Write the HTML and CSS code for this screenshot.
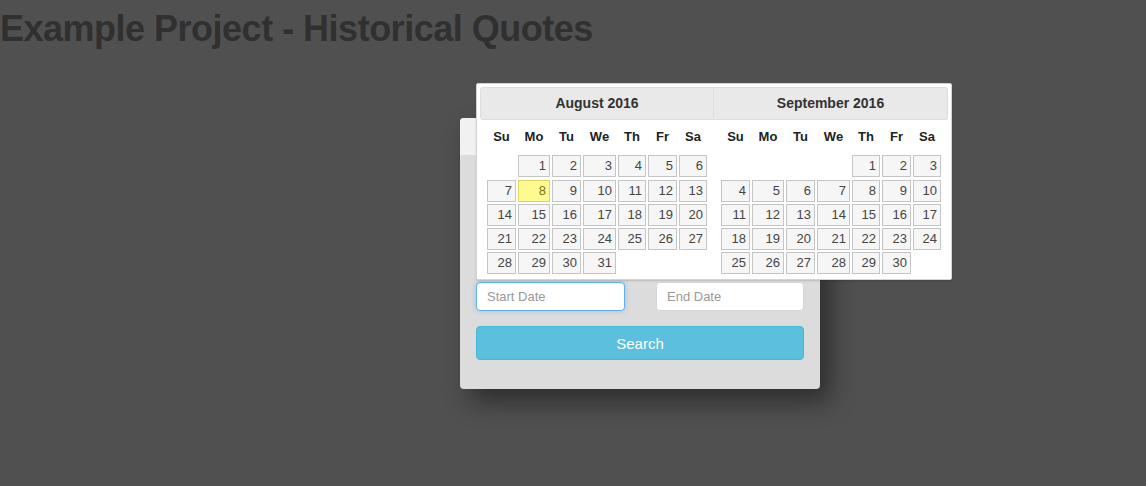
FILE: index.html
```html
<!DOCTYPE html>
<html>
<head>
<meta charset="utf-8">
<link rel="stylesheet" href="styles.css">
</head>
<body>
<h1 class="title">Example Project - Historical Quotes</h1>

<div class="modal">
  <div class="modal-header"></div>
  <div class="modal-body">
    <div class="date-row">
      <input class="date-input focused" type="text" placeholder="Start Date">
      <input class="date-input" type="text" placeholder="End Date">
    </div>
    <button class="search-btn">Search</button>
  </div>
</div>

<div class="datepicker">
  <div class="month first">
    <div class="month-header">August 2016</div>
    <div class="days">
      <div class="dn">Su</div><div class="dn">Mo</div><div class="dn">Tu</div><div class="dn">We</div><div class="dn">Th</div><div class="dn">Fr</div><div class="dn">Sa</div>
      <div class="empty"></div><div class="d">1</div><div class="d">2</div><div class="d">3</div><div class="d">4</div><div class="d">5</div><div class="d">6</div>
      <div class="d">7</div><div class="d today">8</div><div class="d">9</div><div class="d">10</div><div class="d">11</div><div class="d">12</div><div class="d">13</div>
      <div class="d">14</div><div class="d">15</div><div class="d">16</div><div class="d">17</div><div class="d">18</div><div class="d">19</div><div class="d">20</div>
      <div class="d">21</div><div class="d">22</div><div class="d">23</div><div class="d">24</div><div class="d">25</div><div class="d">26</div><div class="d">27</div>
      <div class="d">28</div><div class="d">29</div><div class="d">30</div><div class="d">31</div>
    </div>
  </div>
  <div class="month last">
    <div class="month-header">September 2016</div>
    <div class="days">
      <div class="dn">Su</div><div class="dn">Mo</div><div class="dn">Tu</div><div class="dn">We</div><div class="dn">Th</div><div class="dn">Fr</div><div class="dn">Sa</div>
      <div class="empty"></div><div class="empty"></div><div class="empty"></div><div class="empty"></div><div class="d">1</div><div class="d">2</div><div class="d">3</div>
      <div class="d">4</div><div class="d">5</div><div class="d">6</div><div class="d">7</div><div class="d">8</div><div class="d">9</div><div class="d">10</div>
      <div class="d">11</div><div class="d">12</div><div class="d">13</div><div class="d">14</div><div class="d">15</div><div class="d">16</div><div class="d">17</div>
      <div class="d">18</div><div class="d">19</div><div class="d">20</div><div class="d">21</div><div class="d">22</div><div class="d">23</div><div class="d">24</div>
      <div class="d">25</div><div class="d">26</div><div class="d">27</div><div class="d">28</div><div class="d">29</div><div class="d">30</div>
    </div>
  </div>
</div>
</body>
</html>
```

FILE: styles.css
```css
* { box-sizing: border-box; }

html, body {
  margin: 0;
  padding: 0;
  height: 100%;
}

body {
  background: #505050;
  font-family: "Liberation Sans", Arial, sans-serif;
  overflow: hidden;
}

.title {
  margin: 9px 0 0 0;
  font-size: 36px;
  line-height: 1.1;
  font-weight: bold;
  letter-spacing: -0.5px;
  color: #303030;
}

.modal {
  position: absolute;
  top: 118px;
  left: 460px;
  width: 360px;
  background: #dcdcdc;
  border-radius: 4px;
  box-shadow: 10px 12px 26px rgba(0, 0, 0, 0.45);
}

.modal-header {
  height: 37px;
  background: #f1f1f1;
  border-radius: 4px 4px 0 0;
}

.modal-body {
  padding: 127px 16px 29px 16px;
}

.date-row {
  display: grid;
  grid-template-columns: 149px 148px;
  justify-content: space-between;
}

.date-input {
  height: 29px;
  border: 1px solid #d6d6d6;
  border-radius: 4px;
  background: #fff;
  padding: 0 10px;
  font-family: "Liberation Sans", Arial, sans-serif;
  font-size: 13px;
  color: #555;
  outline: none;
}

.date-input::placeholder {
  color: #999;
}

.date-input.focused {
  border-color: #66afe9;
  box-shadow: inset 0 1px 1px rgba(0, 0, 0, 0.075), 0 0 5px rgba(102, 175, 233, 0.6);
}

.search-btn {
  display: block;
  width: 100%;
  height: 34px;
  margin-top: 15px;
  background: #5bc0de;
  border: 1px solid #46b8da;
  border-radius: 4px;
  color: #fff;
  font-family: "Liberation Sans", Arial, sans-serif;
  font-size: 15px;
  padding: 0;
}

.datepicker {
  position: absolute;
  top: 83px;
  left: 476px;
  width: 476px;
  height: 197px;
  background: #fff;
  border: 1px solid #d4d4d4;
  border-radius: 2px;
  padding: 3px;
  display: grid;
  grid-template-columns: 1fr 1fr;
  box-shadow: 0 1px 2px rgba(0, 0, 0, 0.15);
}

.month {
  display: flex;
  flex-direction: column;
  align-items: center;
}

.month-header {
  align-self: stretch;
  height: 33px;
  padding-bottom: 1px;
  background: #e9e9e9;
  border: 1px solid #dddddd;
  color: #333;
  font-weight: bold;
  font-size: 14px;
  display: flex;
  align-items: center;
  justify-content: center;
}

.first .month-header {
  border-radius: 3px 0 0 3px;
}

.last .month-header {
  border-left: 0;
  border-radius: 0 3px 3px 0;
}

.days {
  display: grid;
  grid-template-columns: 29px 32px 29px 33px 28px 29px 28px;
  grid-template-rows: 33px;
  grid-auto-rows: 22px;
  column-gap: 2px;
  row-gap: 2.25px;
}

.dn {
  font-weight: bold;
  font-size: 13px;
  color: #222;
  display: flex;
  align-items: center;
  justify-content: center;
}

.d {
  background: #f6f6f6;
  border: 1px solid #c5c5c5;
  color: #454545;
  font-size: 13px;
  text-align: right;
  padding-right: 3px;
  line-height: 20px;
}

.d.today {
  background: #fffa90;
  border-color: #dad55e;
  color: #777620;
}
```
